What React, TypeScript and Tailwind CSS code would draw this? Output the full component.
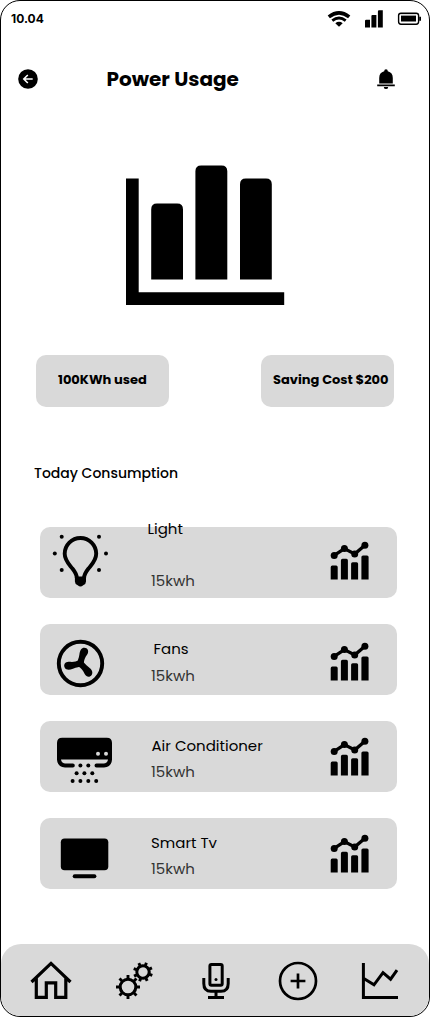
import React from "react";

type Dot = [number, number];

function Dots({ at, r = 2, className }: { at: Dot[]; r?: number; className?: string }) {
  return (
    <>
      {at.map(([x, y]) => (
        <circle key={x + "-" + y} cx={x} cy={y} r={r} className={className} />
      ))}
    </>
  );
}

function BulbIcon() {
  return (
    <svg width="111" height="71" viewBox="0 0 111 71" className="shrink-0">
      <Dots at={[[21.7, 9.8], [59, 9.8], [14.8, 26.4], [66, 26.4], [21.7, 43.1], [59, 43.1]]} />
      <path d="M36.8 51C36.8 47.5 35.6 45.6 32.6 41.8C28.8 37 24.7 33.5 24.7 26.8A15.75 15.75 0 0 1 56.2 26.8C56.2 33.5 52.1 37 48.3 41.8C45.3 45.6 44.1 47.5 44.1 51" fill="none" stroke="#000" strokeWidth="3.9" />
      <path d="M34.9 49.5H46V54.5Q46 57.2 43.2 58.2Q40.5 61 37.7 58.2Q34.9 57.2 34.9 54.5Z" />
    </svg>
  );
}

function FanIcon() {
  const blade = "M-3.4 1.5C-3 -3-1.4 -5-.9 -9C-.4 -13 1.2 -15.6 4 -15.6C7.5 -15.5 8.8 -12.2 7.2 -9.4C5 -6 3.4 -4 3.6 1.5Z";
  return (
    <svg width="111" height="71" viewBox="0 0 111 71" className="shrink-0">
      <circle cx="40.5" cy="39.5" r="21.7" fill="none" stroke="#000" strokeWidth="3.9" />
      <g transform="translate(40.3 39.4)">
        <path d={blade} />
        <path d={blade} transform="rotate(120)" />
        <path d={blade} transform="rotate(240)" />
      </g>
    </svg>
  );
}

function AirConditionerIcon() {
  return (
    <svg width="111" height="71" viewBox="0 0 111 71" className="shrink-0">
      <path d="M17 38.5V22Q17 16.8 22.2 16.8H66.8Q72 16.8 72 22V38.5Z" />
      <path d="M19 37V38.5Q19.5 44.4 25 44.4H32.8M56.5 44.4H64Q69.5 44.4 70 38.5V37" fill="none" stroke="#000" strokeWidth="4" strokeLinecap="round" />
      <Dots at={[[58, 32.7], [66, 32.7]]} className="fill-[#d9d9d9]" />
      <Dots at={[[40.4, 44.4], [48.3, 44.4], [36.6, 52.3], [44.4, 52.3], [52.3, 52.3], [32.6, 60], [40.4, 60], [48.3, 60], [56.2, 60]]} />
    </svg>
  );
}

function TvIcon() {
  return (
    <svg width="111" height="71" viewBox="0 0 111 71" className="shrink-0">
      <rect x="20.8" y="20.4" width="47.5" height="31.9" rx="3.8" />
      <rect x="32.7" y="56.2" width="23.7" height="4" rx="2" />
    </svg>
  );
}

function TrendIcon({ className }: { className: string }) {
  return (
    <svg width="40" height="40" viewBox="0 0 40 40" className={className}>
      <path d="M4.2 14.4L14.4 7.6L24.7 13L34.9 4.2" fill="none" stroke="#000" strokeWidth="3.4" />
      <Dots at={[[4.2, 14.4], [14.4, 7.6], [24.7, 13], [34.9, 4.2]]} r={3.5} />
      <path d="M.7 38.4V26.2Q.7 24.6 2.3 24.6H6.2Q7.7 24.6 7.7 26.2V38.4ZM10.9 38.4V19.4Q10.9 17.8 12.5 17.8H16.4Q17.9 17.8 17.9 19.4V38.4ZM21.1 38.4V22.8Q21.1 21.2 22.7 21.2H26.6Q28.1 21.2 28.1 22.8V38.4ZM31.4 38.4V16Q31.4 14.4 33 14.4H37Q38.6 14.4 38.6 16V38.4Z" />
    </svg>
  );
}

function Gear({ x, y, r, tooth, turn }: { x: number; y: number; r: number; tooth: number; turn: number }) {
  return (
    <g transform={`translate(${x} ${y}) rotate(${turn})`} stroke="#000" fill="none">
      <circle r={r} strokeWidth="3" />
      {[0, 45, 90, 135, 180, 225, 270, 315].map((a) => (
        <path key={a} d={`M0 ${-r}V${-tooth}`} strokeWidth="2.9" transform={`rotate(${a})`} />
      ))}
    </g>
  );
}

const devices = [
  { name: "Light", icon: <BulbIcon />, nameClass: "-mt-[10px] -ml-[3.5px]", useClass: "mt-[28px]", trend: "mt-[14px]" },
  { name: "Fans", icon: <FanIcon />, nameClass: "mt-[13px] ml-[2.5px]", useClass: "mt-[3px]", trend: "mt-[18px]" },
  { name: "Air Conditioner", icon: <AirConditionerIcon />, nameClass: "mt-[13px] ml-[0.5px]", useClass: "mt-[2px]", trend: "mt-[16px]" },
  { name: "Smart Tv", icon: <TvIcon />, nameClass: "mt-[13px]", useClass: "mt-[2px]", trend: "mt-[16px]" },
];

export default function App() {
  return (
    <div className="flex h-[1017px] w-[430px] flex-col overflow-hidden rounded-[20px] border border-black bg-white font-['Poppins','Inter',sans-serif] text-black">
      <header className="flex h-[35px] shrink-0 items-start pt-[9px] pl-[10px]">
        <span className="mt-px w-[34px] font-['Inter',sans-serif] text-xs leading-4 font-bold whitespace-nowrap">10.04</span>
        <svg width="96" height="20" viewBox="325 10 96 20" className="ml-[280px] shrink-0">
          <g fill="none" stroke="#000">
            <path d="M328.8 16.8Q339 8.8 349.2 16.8" strokeWidth="3.6" />
            <path d="M332.3 20.6Q339 15.4 345.7 20.6" strokeWidth="2.9" />
          </g>
          <path d="M335.3 23.2Q339 20.4 342.7 23.2L339 26.8Z" />
          <path d="M365 21Q365 19.8 366.2 19.8H370V27.6H365ZM371.4 16Q371.4 15 372.5 15H376.4V27.6H371.4ZM377.9 11.4Q377.9 10.2 379 10.2H382.8V27.6H377.9Z" />
          <rect x="398.6" y="13.2" width="20" height="11" rx="2.4" fill="none" stroke="#000" strokeWidth="1.4" />
          <path d="M401 14.6H416V15.8H401Z" className="fill-[#bbb]" />
          <path d="M401 15.8H416V21.4H401ZM419.2 16.7H421V20.7H419.2Z" />
        </svg>
      </header>

      <div className="flex h-[86px] shrink-0 items-start pt-[29px] pl-[17px]">
        <svg width="20" height="28" viewBox="18 65 20 28">
          <circle cx="28" cy="79" r="9.8" />
          <path d="M32.7 79H24M27.8 75L23.8 79L27.8 83" fill="none" stroke="#fff" strokeWidth="1.6" />
        </svg>
        <h1 className="ml-[68.5px] w-[134px] text-xl leading-7 font-bold whitespace-nowrap">Power Usage</h1>
        <svg width="20" height="28" viewBox="376 65 20 28" className="ml-[135.5px]">
          <path d="M379.2 83.4V78Q379.2 72.5 384.2 71.2Q384.2 69.2 386 69.2Q387.8 69.2 387.8 71.2Q392.8 72.5 392.8 78V83.4ZM377.2 84.4H394.8V86.2H377.2ZM383.8 86.9H388.2Q388 89.1 386 89.1Q384 89.1 383.8 86.9Z" />
        </svg>
      </div>

      <div className="mt-[42px] flex h-[142px] shrink-0 pl-[125px]">
        <svg width="160" height="142" viewBox="126 164 160 142">
          <path d="M126 178.4H138.7V292.3H284.2V305H126Z" />
          <path d="M151.2 279.6V209.4Q151.2 203.6 157 203.6H177.2Q183 203.6 183 209.4V279.6ZM195.4 279.6V171.2Q195.4 165.4 201.2 165.4H221.5Q227.3 165.4 227.3 171.2V279.6ZM240 279.6V184.2Q240 178.4 245.8 178.4H266Q271.8 178.4 271.8 184.2V279.6Z" />
        </svg>
      </div>

      <div className="mt-[49px] flex h-[52px] shrink-0 justify-between pr-[35px] pl-[35px]">
        <div className="flex w-[133px] items-start rounded-[10px] bg-[#d9d9d9] pt-[15px] pl-[22px] text-[13px] leading-5 font-bold whitespace-nowrap">
          <span>100KWh used</span>
        </div>
        <div className="flex w-[133px] items-start rounded-[10px] bg-[#d9d9d9] pt-[15px] pl-[12px] text-[13px] leading-5 font-bold whitespace-nowrap">
          <span>Saving Cost $200</span>
        </div>
      </div>

      <h2 className="mt-[56px] h-5 shrink-0 pl-[33px] text-sm leading-5 font-medium">Today Consumption</h2>

      <main className="mt-[44px] flex shrink-0 flex-col gap-[26px] pr-[32px] pl-[39px]">
        {devices.map((d) => (
          <section key={d.name} className="flex h-[71px] items-start rounded-[10px] bg-[#d9d9d9]">
            {d.icon}
            <div className="flex w-[179px] flex-col text-[15px] leading-6 whitespace-nowrap">
              <span className={d.nameClass}>{d.name}</span>
              <span className={"text-[#333] " + d.useClass}>15kwh</span>
            </div>
            <TrendIcon className={d.trend} />
          </section>
        ))}
      </main>

      <nav className="mt-auto flex h-[72px] shrink-0 items-center rounded-[20px] bg-[#d9d9d9] pl-[29px]">
        <svg width="42" height="40" viewBox="30 960 42 40" fill="none" stroke="#000" strokeWidth="3.2">
          <path d="M31.5 982L51 963.4L70.5 982M36.3 978V997.3H46.3V982.8H55.7V997.3H65.8V978" />
        </svg>
        <svg width="40" height="40" viewBox="115 960 40 40" className="ml-[43px]">
          <Gear x={128} y={987} r={7.8} tooth={12} turn={0} />
          <Gear x={143} y={972} r={6.2} tooth={9.9} turn={20} />
        </svg>
        <svg width="30" height="40" viewBox="201 960 30 40" className="ml-[46px]" fill="none" stroke="#000" strokeWidth="3">
          <rect x="209.9" y="964.5" width="12.3" height="20.8" rx="1.5" />
          <path d="M203.8 978V983.5Q203.8 991.3 211 991.3H221Q228.2 991.3 228.2 983.5V978M216 991V997M208 997.4H224" />
          <circle cx="216" cy="979.4" r="1.5" fill="#000" stroke="none" />
        </svg>
        <svg width="40" height="42" viewBox="278 959 40 42" className="ml-[47px]" fill="none" stroke="#000" strokeWidth="2.7">
          <circle cx="298" cy="981" r="18" />
          <path d="M290.6 981H305.4M298 973.6V988.4" />
        </svg>
        <svg width="40" height="40" viewBox="361 960 40 40" className="ml-[43px]" fill="none" stroke="#000" strokeWidth="3">
          <path d="M363.4 963V997.4H398M363.8 978.4L374 984.8L383 972.6L390.6 979.2L397 970.2" />
        </svg>
      </nav>
    </div>
  );
}
